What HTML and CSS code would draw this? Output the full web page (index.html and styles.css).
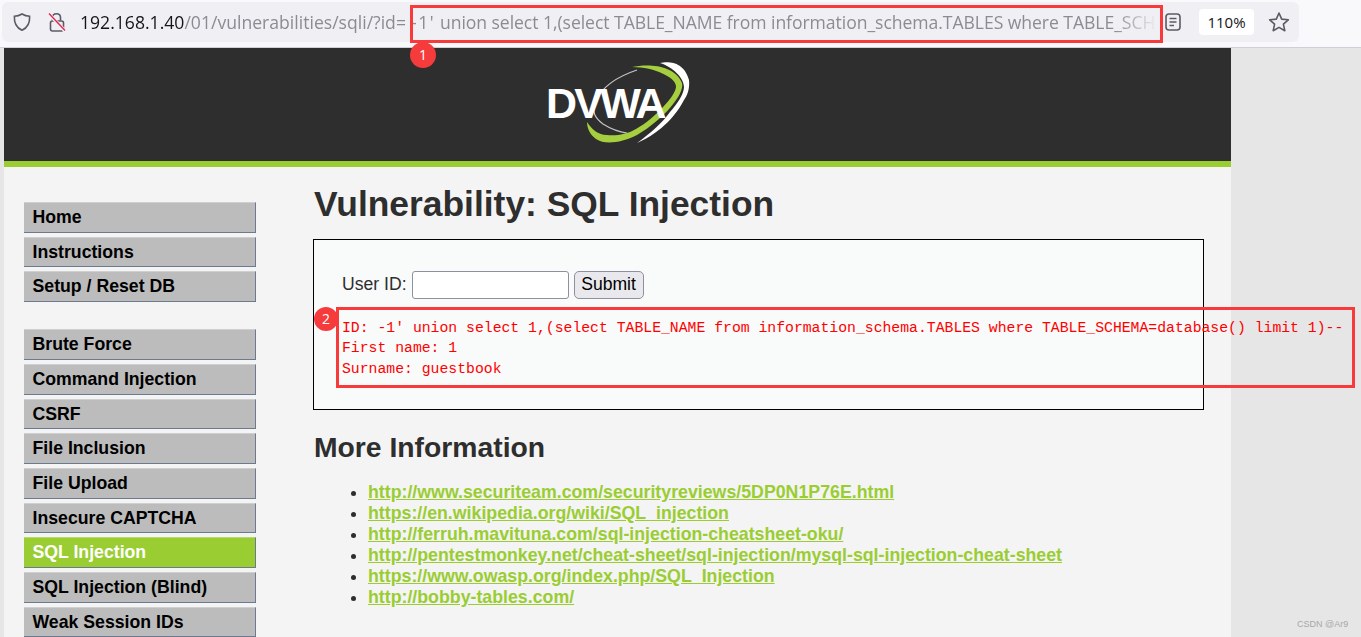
FILE: index.html
```html
<!DOCTYPE html>
<html>
<head>
  <meta charset="UTF-8">
  <title>Vulnerability: SQL Injection</title>
  <link rel="stylesheet" href="styles.css">
</head>
<body>
  <div class="toolbar">
    <div class="urlbar">
      <svg class="icon shield" width="20" height="20" viewBox="0 0 20 20" fill="none" stroke="#5b5b66" stroke-width="1.6"><path d="M10 2 C12.5 3.6 15 4.2 17.6 4.2 C18 10.5 15.8 15.6 10 18.2 C4.2 15.6 2 10.5 2.4 4.2 C5 4.2 7.5 3.6 10 2 Z"/></svg>
      <svg class="icon lock" width="20" height="22" viewBox="0 0 20 22" fill="none" stroke="#5b5b66" stroke-width="1.6"><path d="M5.5 9.5 V6.5 C5.5 1.5 13.5 1.5 13.5 6.5 V9.5"/><rect x="3.5" y="10" width="13" height="10" rx="2"/><path d="M2 3 L18 20" stroke="#f0f0f4" stroke-width="3.4"/><path d="M2 2.5 L18 19.5" stroke="#e22850" stroke-width="1.4"/></svg>
      <div class="url"><span class="host">192.168.1.40</span>/01/vulnerabilities/sqli/?id=<span class="param">-1'</span> <span class="query">union select 1,(select TABLE_NAME from information_schema.TABLES where TABLE_SCH</span></div>
      <svg class="icon reader" width="18" height="20" viewBox="0 0 18 20" fill="none" stroke="#5b5b66" stroke-width="1.6"><rect x="2" y="2" width="14" height="16" rx="3"/><path d="M5.5 6.5 H12.5 M5.5 10 H12.5 M5.5 13.5 H10"/></svg>
      <div class="zoom">110%</div>
      <svg class="icon star" width="22" height="22" viewBox="0 0 22 22" fill="none" stroke="#5b5b66" stroke-width="1.6" stroke-linejoin="round"><path d="M11 2 L13.7 8.1 L20.3 8.8 L15.4 13.2 L16.8 19.7 L11 16.4 L5.2 19.7 L6.6 13.2 L1.7 8.8 L8.3 8.1 Z"/></svg>
    </div>
  </div>

  <div class="viewport">
    <div class="page">
      <div class="header">
        <svg class="logo" width="150" height="90" viewBox="0 0 150 90">
          <path d="M94 14 C76 20 60 30 53 44 C48 56 52 62 60 68 C68 73 76 76 84 77" fill="none" stroke="#c4c4c4" stroke-width="1.2"/>
          <path d="M89 11 C104 8 131 8 139 27 C142 38 120 64 94 79 C78 87 62 89 53 83 C47 79 44 72 44 66 C48 72 54 79 64 79 C74 80 84 78 91 74 C106 67 132 42 133 31 C134 22 112 11 89 11 Z" fill="#a5cf3f"/>
          <path d="M117 7 C125 5 141 5 146 24 C147 33 144 40 141 44 C135 56 120 76 94 87 C108 77 120 66 127 56 C134 48 141 38 141 31 C141 22 130 11 117 7 Z" fill="#ffffff"/>
          <text class="logo-text" x="3" y="62">DVWA</text>
        </svg>
      </div>
      <div class="body">
        <div class="menu">
          <ul class="menu-block">
            <li><a href="#">Home</a></li>
            <li><a href="#">Instructions</a></li>
            <li><a href="#">Setup / Reset DB</a></li>
          </ul>
          <ul class="menu-block">
            <li><a href="#">Brute Force</a></li>
            <li><a href="#">Command Injection</a></li>
            <li><a href="#">CSRF</a></li>
            <li><a href="#">File Inclusion</a></li>
            <li><a href="#">File Upload</a></li>
            <li><a href="#">Insecure CAPTCHA</a></li>
            <li class="selected"><a href="#">SQL Injection</a></li>
            <li><a href="#">SQL Injection (Blind)</a></li>
            <li><a href="#">Weak Session IDs</a></li>
          </ul>
        </div>
        <div class="content">
          <h1>Vulnerability: SQL Injection</h1>
          <div class="code-area">
            <form class="id-form">
              <label>User ID:</label>
              <input type="text" class="id-input">
              <button type="button" class="id-submit">Submit</button>
            </form>
            <pre class="result">ID: -1' union select 1,(select TABLE_NAME from information_schema.TABLES where TABLE_SCHEMA=database() limit 1)--
First name: 1
Surname: guestbook</pre>
          </div>
          <h2>More Information</h2>
          <ul class="links">
            <li><a href="#">http://www.securiteam.com/securityreviews/5DP0N1P76E.html</a></li>
            <li><a href="#">https://en.wikipedia.org/wiki/SQL_injection</a></li>
            <li><a href="#">http://ferruh.mavituna.com/sql-injection-cheatsheet-oku/</a></li>
            <li><a href="#">http://pentestmonkey.net/cheat-sheet/sql-injection/mysql-sql-injection-cheat-sheet</a></li>
            <li><a href="#">https://www.owasp.org/index.php/SQL_Injection</a></li>
            <li><a href="#">http://bobby-tables.com/</a></li>
          </ul>
        </div>
      </div>
    </div>
  </div>

  <!-- annotations drawn over the screenshot -->
  <div class="mark mark-url"></div>
  <div class="badge badge-url">1</div>
  <div class="mark mark-result"></div>
  <div class="badge badge-result">2</div>
  <div class="watermark">CSDN @Ar9</div>
</body>
</html>
```

FILE: styles.css
```css
html, body {
  margin: 0;
  padding: 0;
  height: 637px;
  overflow: hidden;
}
body {
  position: relative;
  font-family: "Liberation Sans", Arial, sans-serif;
  background: #e6e6e6;
}
.toolbar {
  height: 48px;
  box-sizing: border-box;
  background: #f9f9fb;
  border-bottom: 1px solid #cfcfd8;
  padding: 2px 0 0 2px;
}
.urlbar {
  width: 1297px;
  height: 40px;
  background: #f0f0f4;
  border-radius: 6px;
  display: flex;
  align-items: center;
}
.icon {
  flex: none;
}
.shield {
  margin-left: 10px;
}
.lock {
  margin-left: 15px;
}
.url {
  width: 1078px;
  margin-left: 13px;
  font-family: "Open Sans", sans-serif;
  font-size: 17.6px;
  color: #8b8b92;
  white-space: nowrap;
  overflow: hidden;
  -webkit-mask-image: linear-gradient(to right, #000 96%, transparent);
  mask-image: linear-gradient(to right, #000 96%, transparent);
}
.host {
  color: #15141a;
}
.param {
  padding-left: 5px;
  letter-spacing: 1.6px;
}
.query {
  letter-spacing: -0.06px;
}
.reader {
  margin-left: 6px;
}
.zoom {
  width: 55px;
  height: 26px;
  margin-left: 17px;
  background: #fff;
  border-radius: 4px;
  color: #15141a;
  font-family: "Open Sans", sans-serif;
  font-size: 15px;
  line-height: 26px;
  text-align: center;
}
.star {
  margin-left: 14px;
}
.viewport {
  height: 589px;
  padding-left: 4px;
}
.page {
  width: 1227px;
  background: #f4f4f4;
  height: 589px;
}
.header {
  height: 113px;
  background: #2e2e2e;
  border-bottom: 6px solid #9acd32;
  display: flex;
  justify-content: center;
}
.logo {
  margin-top: 8px;
}
.logo-text {
  font-family: "Liberation Sans", sans-serif;
  font-weight: bold;
  font-size: 43px;
  letter-spacing: -2.8px;
  fill: #fff;
}
.body {
  display: flex;
}
.menu {
  width: 232px;
  margin-left: 20px;
  padding-top: 35px;
  flex: none;
}
.menu-block {
  list-style: none;
  margin: 0 0 27.5px 0;
  padding: 0;
  display: grid;
  gap: 4px;
}
.menu-block li {
  height: 30.67px;
  box-sizing: border-box;
  background: #bcbcbc;
  border-top: 1px solid #cfcfcf;
  border-right: 1px solid #6b7a8f;
  border-bottom: 1px solid #6b7a8f;
}
.menu-block a {
  display: block;
  padding-left: 8.5px;
  font-size: 17.7px;
  font-weight: bold;
  line-height: 29px;
  color: #000;
  text-decoration: none;
}
.menu-block .selected {
  background: #9acd32;
  border-top-color: #b5dc66;
}
.menu-block .selected a {
  color: #fff;
}
.content {
  margin-left: 57px;
  width: 891px;
  flex: none;
}
h1 {
  margin: 17px 0 15px 1px;
  font-size: 35.4px;
  line-height: 40px;
  color: #2e2e2e;
}
.code-area {
  width: 891px;
  height: 171px;
  box-sizing: border-box;
  border: 1px solid #000;
  background: #f9fafa;
  padding: 30px 0 0 28px;
}
.id-form {
  display: flex;
  align-items: center;
  height: 29px;
  font-size: 17.6px;
  color: #2e2e2e;
}
.id-form label {
  margin-right: 5px;
}
.id-input {
  width: 157px;
  height: 28px;
  box-sizing: border-box;
  padding: 0 4px;
  border: 1px solid #8f8f9d;
  border-radius: 3px;
  background: #fff;
}
.id-submit {
  width: 70px;
  height: 28px;
  margin-left: 5px;
  padding: 0;
  border: 1px solid #8f8f9d;
  border-radius: 5px;
  background: #e9e9ed;
  color: #000;
  font-family: "Liberation Sans", sans-serif;
  font-size: 17.6px;
}
.result {
  margin: 19px 0 0 0;
  font-family: "Liberation Mono", monospace;
  font-size: 14.77px;
  line-height: 20.4px;
  color: #ff0000;
  white-space: pre;
}
h2 {
  margin: 21px 0 0 1px;
  font-size: 28.3px;
  line-height: 33px;
  color: #2e2e2e;
}
.links {
  margin: 18px 0 0 0;
  padding: 0 0 0 55px;
  font-size: 17.75px;
  line-height: 21px;
  color: #2e2e2e;
}
.links a {
  color: #9acd32;
  font-weight: bold;
}
.mark {
  position: absolute;
  box-sizing: border-box;
  border: 3px solid #f93a3a;
}
.mark-url {
  left: 410px;
  top: 5px;
  width: 753px;
  height: 38px;
}
.mark-result {
  left: 336px;
  top: 307px;
  width: 1019px;
  height: 81px;
}
.badge {
  position: absolute;
  border-radius: 50%;
  background: #f53b3b;
  color: #fff;
  font-family: "Open Sans", sans-serif;
  text-align: center;
}
.badge-url {
  left: 410px;
  top: 42px;
  width: 26px;
  height: 26px;
  font-size: 14px;
  line-height: 26px;
}
.badge-result {
  left: 314px;
  top: 307px;
  width: 24px;
  height: 24px;
  font-size: 14px;
  line-height: 24px;
}
.watermark {
  position: absolute;
  left: 1297px;
  top: 618px;
  font-size: 9px;
  line-height: 12px;
  color: #a8a8a8;
}
```
